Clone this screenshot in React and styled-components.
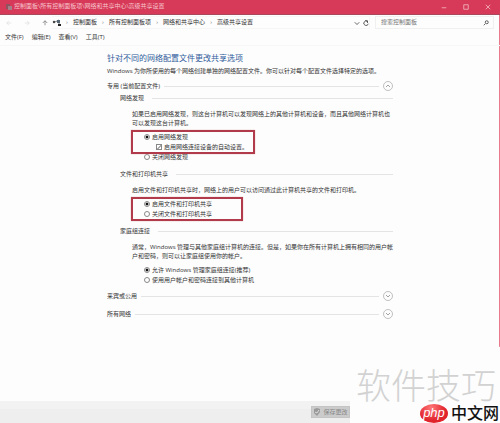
import React, { useState } from "react";
import styled, { createGlobalStyle } from "styled-components";

const GlobalStyle = createGlobalStyle`
  * {
    box-sizing: border-box;
  }
  body {
    margin: 0;
    background: #fdfdfd;
    color: #333;
    font: 6px/9px "Open Sans", "Noto Sans CJK SC", sans-serif;
  }
  button, input {
    font: inherit;
    color: inherit;
  }
`;

const Window = styled.div`
  position: relative;
  display: flex;
  flex-direction: column;
  min-height: 100vh;
  background: linear-gradient(#e87a8e, #e87a8e) right top / 1px 82% no-repeat;
`;

const TitleBar = styled.header`
  display: flex;
  align-items: center;
  gap: 2px;
  height: 15px;
  padding: 0 4px 1px 6px;
  background: #d63a58;
  border-bottom: 1px solid #a84a5c;
  color: #f6c3cc;
`;

const WindowTitle = styled.h1`
  flex: 1;
  margin: 0;
  font-size: 6px;
  font-weight: 400;
`;

const WindowButton = styled.button`
  display: flex;
  justify-content: center;
  width: 16px;
  margin-left: 4px;
  padding: 0;
  border: 0;
  background: none;
`;

const NavBar = styled.nav`
  display: flex;
  align-items: center;
  height: 15px;
  padding: 0 6px;
`;

const NavButton = styled.button`
  display: flex;
  width: ${(props) => (props.$off ? "18px" : "10px")};
  padding: 0;
  border: 0;
  background: none;
  color: ${(props) => (props.$off ? "#ddd" : "#777")};
`;

const Address = styled.div`
  display: flex;
  flex: 1;
  align-items: center;
  height: 13px;
  border: 1px solid #f6f6f6;
  border-left: 0;
`;

const Crumb = styled.a`
  color: #333;
  text-decoration: none;
  white-space: nowrap;
`;

const CrumbArrow = styled.span`
  width: 12px;
  text-align: center;
  color: #777;
`;

const Tools = styled.span`
  display: flex;
  gap: 3px;
  margin-left: auto;
`;

const Search = styled.label`
  display: flex;
  align-items: center;
  width: 119px;
  height: 13px;
  margin-left: 5px;
  padding: 0 4px 0 5px;
  border: 1px solid #f0f0f0;
`;

const SearchInput = styled.input`
  flex: 1;
  min-width: 0;
  padding: 0;
  border: 0;
  outline: 0;
  background: none;
  &::placeholder {
    color: #777;
    opacity: 1;
  }
`;

const MenuBar = styled.div`
  display: flex;
  gap: 8px;
  padding: 3px 5px;
  border-bottom: 1px solid #f7f7f7;
`;

const MenuItem = styled.button`
  padding: 0;
  border: 0;
  background: none;
`;

const Main = styled.main`
  flex: 1;
  padding: 5px 107px 0;
`;

const Heading = styled.h2`
  margin: 0 0 2px;
  color: #2f5c9c;
  font-size: 8px;
  font-weight: 400;
  line-height: 14px;
`;

const Text = styled.p`
  margin: 0;
  white-space: nowrap;
`;

const Profile = styled.div`
  display: flex;
  align-items: center;
  gap: 4px;
  height: 18px;
`;

const TopProfile = styled(Profile)`
  height: 14px;
  margin-top: 3px;
`;

const Rule = styled.span`
  flex: 1;
  height: 1px;
  background: #e4e4e4;
`;

const RoundButton = styled.button`
  display: flex;
  padding: 0;
  border: 0;
  background: none;
  color: #999;
`;

const Group = styled.section`
  padding: 0 0 2px 13px;
  & + & {
    padding-top: 5px;
  }
`;

const GroupTitle = styled.h3`
  display: flex;
  align-items: center;
  gap: 8px;
  margin: 0 0 7px;
  font-size: 6px;
  font-weight: 400;
  line-height: 10px;
`;

const GroupBody = styled.div`
  padding-left: 12px;
`;

const Options = styled.div`
  position: relative;
  display: flex;
  flex-direction: column;
  align-items: flex-start;
  margin-top: 4px;
  padding-left: 12px;
`;

const Option = styled.label`
  display: flex;
  align-items: center;
  gap: 2px;
  height: 10px;
  padding-left: ${(props) => (props.$nested ? "12px" : "0")};
  white-space: nowrap;
`;

const Radio = styled.input`
  appearance: none;
  width: 6px;
  height: 6px;
  margin: 0;
  border: 1px solid #888;
  border-radius: 50%;
  background: #fff;
  &:checked {
    background: radial-gradient(#111 45%, #fff 60%);
  }
`;

const Check = styled.input`
  appearance: none;
  width: 6px;
  height: 6px;
  margin: 0;
  border: 1px solid #888;
  background: #fff;
  &:checked {
    background: linear-gradient(135deg, #fff 50%, #aaa 50%, #aaa 70%, #fff 70%);
  }
`;

const RedFrame = styled.span`
  position: absolute;
  top: -2px;
  left: -1px;
  width: ${(props) => props.$width};
  height: 24px;
  border: 2px solid #b23b4b;
  box-shadow: 0 0 1px #d99;
  pointer-events: none;
`;

const Footer = styled.footer`
  display: flex;
  justify-content: flex-end;
  align-items: center;
  height: 22px;
  margin-right: 150px;
  background: linear-gradient(#f2f2f2 8px, #eee 8px);
`;

const SaveButton = styled.button`
  display: flex;
  align-items: center;
  justify-content: center;
  gap: 2px;
  width: 39px;
  height: 12px;
  padding: 0;
  border: 1px solid #c4c4c4;
  background: #cbcbcb;
  color: #888;
`;

const Watermark = styled.div`
  position: absolute;
  right: 4px;
  bottom: 17px;
  color: #d2d2d2;
  font: 300 35px/38px "Liberation Sans", "Noto Sans CJK SC", sans-serif;
`;

const SiteBadge = styled.div`
  position: absolute;
  right: 1px;
  bottom: 0;
  display: flex;
  align-items: center;
  gap: 3px;
  height: 19px;
  color: #111;
  font: 500 16px/19px "Liberation Sans", "Noto Sans CJK SC", sans-serif;
`;

const PhpOval = styled.span`
  width: 28px;
  height: 19px;
  border-radius: 50%;
  background: radial-gradient(at 40% 20%, #f77, #e1232c 60%);
  color: #fff;
  font: italic 400 13px/17px "Liberation Sans", sans-serif;
  text-align: center;
`;

const crumbs = ["控制面板", "所有控制面板项", "网络和共享中心", "高级共享设置"];
const menus = ["文件(F)", "编辑(E)", "查看(V)", "工具(T)"];

const Icon = ({ d, size = 6, width = 1 }) => (
  <svg
    width={size}
    height={size}
    viewBox="0 0 8 8"
    fill="none"
    stroke="currentColor"
    strokeWidth={width}
  >
    <path d={d} />
  </svg>
);

const Chevron = ({ up, label }) => (
  <RoundButton aria-label={label}>
    <svg width="10" height="10" viewBox="0 0 10 10" fill="none" stroke="currentColor">
      <circle cx="5" cy="5" r="4.5" strokeWidth="0.6" />
      <path d={up ? "M3 6l2-2 2 2" : "M3 4l2 2 2-2"} strokeWidth="0.9" />
    </svg>
  </RoundButton>
);

const RadioPair = ({ name, labels, children }) => {
  const [picked, setPicked] = useState(0);
  const option = (idx) => (
    <Option>
      <Radio
        type="radio"
        name={name}
        checked={picked === idx}
        onChange={() => setPicked(idx)}
      />
      {labels[idx]}
    </Option>
  );
  return (
    <>
      {option(0)}
      {children}
      {option(1)}
    </>
  );
};

const App = () => {
  const [autoSetup, setAutoSetup] = useState(true);

  return (
    <Window>
      <GlobalStyle />
      <TitleBar>
        <svg width="6" height="8" viewBox="0 0 6 8">
          <path d="M0 1h4v5H0z" fill="#8f5360" />
          <path d="M2 3h4v4H2z" fill="#a58088" />
        </svg>
        <WindowTitle>控制面板\所有控制面板项\网络和共享中心\高级共享设置</WindowTitle>
        <WindowButton aria-label="最小化">
          <Icon d="M1 5h6" />
        </WindowButton>
        <WindowButton aria-label="最大化">
          <Icon d="M1 1h6v6H1z" />
        </WindowButton>
        <WindowButton aria-label="关闭">
          <Icon d="M1 1l6 6M7 1L1 7" />
        </WindowButton>
      </TitleBar>
      <NavBar>
        <NavButton $off aria-label="后退">
          <Icon d="M7 4H1M4 1L1 4l3 3" />
        </NavButton>
        <NavButton $off aria-label="前进">
          <Icon d="M1 4h6M4 1l3 3-3 3" />
        </NavButton>
        <NavButton aria-label="向上">
          <Icon d="M4 7V1M1 4l3-3 3 3" />
        </NavButton>
        <Address>
          <svg width="9" height="8" viewBox="0 0 9 8">
            <path d="M1 3h2l4-2v5h1" fill="none" stroke="#555" strokeWidth="0.8" />
            <circle cx="2" cy="3" r="1.2" fill="#444" />
            <path d="M5 1h3v3H5z" fill="#567" />
            <path d="M6 5h3v2H6z" fill="#222" />
          </svg>
          {crumbs.map((crumb) => (
            <React.Fragment key={crumb}>
              <CrumbArrow>›</CrumbArrow>
              <Crumb href="#">{crumb}</Crumb>
            </React.Fragment>
          ))}
          <Tools>
            <Icon d="M1 3l3 3 3-3" />
            <Icon d="M6 2a3 3 0 1 0 1 3M3 1h3v3" />
          </Tools>
        </Address>
        <Search>
          <SearchInput placeholder="搜索控制面板" aria-label="搜索控制面板" />
          <Icon d="M3 5L1 7M3 3a2 2 0 1 0 4 0a2 2 0 1 0-4 0" />
        </Search>
      </NavBar>
      <MenuBar>
        {menus.map((menu) => (
          <MenuItem key={menu}>{menu}</MenuItem>
        ))}
      </MenuBar>
      <Main>
        <Heading>针对不同的网络配置文件更改共享选项</Heading>
        <Text>
          Windows 为你所使用的每个网络创建单独的网络配置文件。你可以针对每个配置文件选择特定的选项。
        </Text>
        <TopProfile>
          专用 (当前配置文件)
          <Rule />
          <Chevron up label="收起" />
        </TopProfile>
        <Group>
          <GroupTitle>
            网络发现
            <Rule />
          </GroupTitle>
          <GroupBody>
            <Text>
              如果已启用网络发现，则这台计算机可以发现网络上的其他计算机和设备，而且其他网络计算机也
              <br />
              可以发现这台计算机。
            </Text>
            <Options>
              <RadioPair name="discovery" labels={["启用网络发现", "关闭网络发现"]}>
                <Option $nested>
                  <Check
                    type="checkbox"
                    checked={autoSetup}
                    onChange={() => setAutoSetup(!autoSetup)}
                  />
                  启用网络连接设备的自动设置。
                </Option>
              </RadioPair>
              <RedFrame $width="124px" />
            </Options>
          </GroupBody>
        </Group>
        <Group>
          <GroupTitle>
            文件和打印机共享
            <Rule />
          </GroupTitle>
          <GroupBody>
            <Text>
              启用文件和打印机共享时，网络上的用户可以访问通过此计算机共享的文件和打印机。
            </Text>
            <Options>
              <RadioPair
                name="sharing"
                labels={["启用文件和打印机共享", "关闭文件和打印机共享"]}
              />
              <RedFrame $width="112px" />
            </Options>
          </GroupBody>
        </Group>
        <Group>
          <GroupTitle>
            家庭组连接
            <Rule />
          </GroupTitle>
          <GroupBody>
            <Text>
              通常，Windows 管理与其他家庭组计算机的连接。但是，如果你在所有计算机上拥有相同的用户帐
              <br />
              户和密码，则可以让家庭组使用你的帐户。
            </Text>
            <Options>
              <RadioPair
                name="homegroup"
                labels={[
                  "允许 Windows 管理家庭组连接(推荐)",
                  "使用用户帐户和密码连接到其他计算机",
                ]}
              />
            </Options>
          </GroupBody>
        </Group>
        <Profile>
          来宾或公用
          <Rule />
          <Chevron label="展开来宾或公用" />
        </Profile>
        <Profile>
          所有网络
          <Rule />
          <Chevron label="展开所有网络" />
        </Profile>
      </Main>
      <Footer>
        <SaveButton>
          <svg width="8" height="8" viewBox="0 0 8 8">
            <path d="M1 1l3-1 3 1v3L4 8 1 5z" fill="#999" />
            <path d="M2 4l2 1 2-3" fill="none" stroke="#ddd" />
          </svg>
          保存更改
        </SaveButton>
      </Footer>
      <Watermark>软件技巧</Watermark>
      <SiteBadge>
        <PhpOval>php</PhpOval>
        中文网
      </SiteBadge>
    </Window>
  );
};

export default App;
